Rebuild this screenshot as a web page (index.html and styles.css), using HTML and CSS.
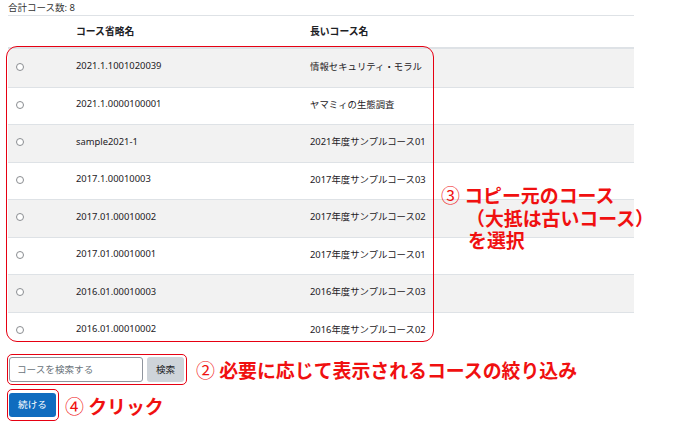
FILE: index.html
```html
<!DOCTYPE html>
<html lang="ja">
<head>
<meta charset="utf-8">
<link rel="stylesheet" href="styles.css">
</head>
<body>
<div class="page">
  <div class="summary">合計コース数: 8</div>
  <div class="table">
    <div class="row head">
      <div class="c1"></div>
      <div class="c2">コース省略名</div>
      <div class="c3">長いコース名</div>
    </div>
    <div class="row odd"><div class="c1"><span class="radio"></span></div><div class="c2">2021.1.1001020039</div><div class="c3">情報セキュリティ・モラル</div></div>
    <div class="row"><div class="c1"><span class="radio"></span></div><div class="c2">2021.1.0000100001</div><div class="c3">ヤマミィの生態調査</div></div>
    <div class="row odd"><div class="c1"><span class="radio"></span></div><div class="c2">sample2021-1</div><div class="c3">2021年度サンプルコース01</div></div>
    <div class="row"><div class="c1"><span class="radio"></span></div><div class="c2">2017.1.00010003</div><div class="c3">2017年度サンプルコース03</div></div>
    <div class="row odd"><div class="c1"><span class="radio"></span></div><div class="c2">2017.01.00010002</div><div class="c3">2017年度サンプルコース02</div></div>
    <div class="row"><div class="c1"><span class="radio"></span></div><div class="c2">2017.01.00010001</div><div class="c3">2017年度サンプルコース01</div></div>
    <div class="row odd"><div class="c1"><span class="radio"></span></div><div class="c2">2016.01.00010003</div><div class="c3">2016年度サンプルコース03</div></div>
    <div class="row"><div class="c1"><span class="radio"></span></div><div class="c2">2016.01.00010002</div><div class="c3">2016年度サンプルコース02</div></div>
    <div class="mark-table"></div>
    <div class="note note3">
      <div class="l1"><span class="num">③</span> コピー元のコース</div>
      <div class="l2">（大抵は古いコース）</div>
      <div class="l3">を選択</div>
    </div>
  </div>
  <div class="search-row">
    <div class="mark search">
      <div class="input">コースを検索する</div>
      <div class="btn-grey">検索</div>
    </div>
    <div class="note"><span class="num">②</span> 必要に応じて表示されるコースの絞り込み</div>
  </div>
  <div class="go-row">
    <div class="mark go">
      <div class="btn-blue">続ける</div>
    </div>
    <div class="note"><span class="num">④</span> クリック</div>
  </div>
</div>
</body>
</html>
```
FILE: styles.css
```css
* { box-sizing: border-box; }
html, body { margin: 0; padding: 0; background: #fff; }
body {
  font-family: "Noto Sans", "Noto Sans CJK JP", sans-serif;
  color: #1d2125;
  width: 674px;
  height: 428px;
  overflow: hidden;
}
.page { padding-left: 8px; }
.summary {
  width: 626px;
  height: 16px;
  font-size: 9.5px;
  line-height: 15px;
  color: #333;
  border-bottom: 1px solid #dee2e6;
}
.table { position: relative; width: 626px; }
.row {
  display: grid;
  grid-template-columns: 60px 234px 332px;
  height: 37.5px;
  border-top: 1px solid #dee2e6;
  align-items: center;
  font-size: 9.4px;
  padding-bottom: 4px;
}
.row.head {
  height: 33px;
  border-top: none;
  border-bottom: 2px solid #dee2e6;
  font-weight: bold;
  font-size: 9.8px;
  color: #1d2125;
  padding-bottom: 1px;
}
.row.head + .row { border-top: none; }
.row.odd { background: #f2f2f2; }
.c1 { padding-left: 8px; display: flex; align-items: center; padding-top: 2px; }
.radio {
  width: 8px; height: 8px;
  border: 1px solid #8a8d91;
  border-radius: 50%;
  display: block;
  background: #fff;
}
.c2, .c3 { white-space: nowrap; padding-left: 8px; }
.mark-table {
  position: absolute;
  left: -2px; top: 30px;
  width: 428px; height: 296px;
  border: 1px solid #e60012;
  border-radius: 11px;
}
.note {
  color: #f01010;
  font-weight: bold;
  font-size: 18.9px;
  white-space: nowrap;
  font-family: "Noto Sans CJK JP", sans-serif;
}
.note .num { font-weight: normal; }
.note3 {
  position: absolute;
  left: 433px; top: 168px;
  line-height: 22.5px;
}
.note3 .l2 { padding-left: 25px; }
.note3 .l3 { padding-left: 27px; }
.search-row {
  display: flex;
  align-items: center;
  gap: 9px;
  margin-top: 5px;
  margin-left: -1px;
}
.mark {
  border: 1px solid #e60012;
  border-radius: 5px;
  display: flex;
  align-items: center;
}
.search { width: 180px; height: 31px; padding: 0 2px 0 1px; gap: 4px; }
.input {
  width: 134px; height: 25px;
  border: 1px solid #8f959e;
  border-radius: 3px;
  color: #6a737b;
  font-size: 9.6px;
  line-height: 23px;
  padding-left: 7px;
}
.btn-grey {
  width: 37px; height: 25px;
  background: #ced4da;
  border-radius: 3px;
  font-size: 9.6px;
  line-height: 25px;
  text-align: center;
  color: #1d2125;
}
.go-row {
  display: flex;
  align-items: center;
  gap: 6px;
  margin-top: 4px;
  margin-left: -1px;
}
.go { width: 52px; height: 32px; padding-left: 1px; }
.btn-blue {
  width: 47px; height: 24px;
  background: #0f6cbf;
  border-radius: 3px;
  color: #fff;
  font-size: 9.6px;
  line-height: 24px;
  text-align: center;
}
```
